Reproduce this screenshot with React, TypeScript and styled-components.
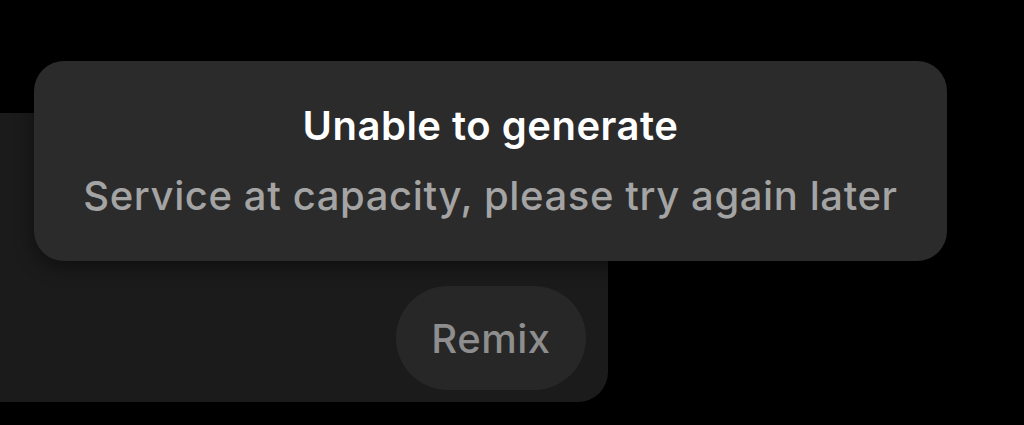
import React from 'react';
import styled, { createGlobalStyle } from 'styled-components';

const GlobalStyle = createGlobalStyle`
  html, body {
    margin: 0;
    padding: 0;
    background: #000;
  }
  body {
    font-family: Inter, "Noto Sans", "Liberation Sans", sans-serif;
    -webkit-font-smoothing: antialiased;
  }
`;

const Stage = styled.div`
  position: relative;
  width: 1024px;
  height: 425px;
  overflow: hidden;
  background: #000;
`;

const Card = styled.div`
  display: flex;
  justify-content: flex-end;
  align-items: flex-end;
  box-sizing: border-box;
  width: 608px;
  height: 289px;
  margin-top: 113px;
  padding: 0 22px 12px 0;
  background: #1b1b1b;
  border-radius: 0 0 30px 0;
`;

const RemixButton = styled.button`
  display: flex;
  align-items: center;
  justify-content: center;
  width: 190px;
  height: 104px;
  border: none;
  border-radius: 52px;
  background: #272727;
  color: #8e8e8e;
  font-family: inherit;
  font-size: 40px;
  font-weight: 500;
  letter-spacing: 0.5px;
  padding: 0;
`;

const Toast = styled.div`
  position: absolute;
  left: 34px;
  top: 61px;
  width: 913px;
  height: 200px;
  box-sizing: border-box;
  display: flex;
  flex-direction: column;
  align-items: center;
  justify-content: center;
  gap: 26px;
  background: #2b2b2b;
  border-radius: 30px;
  box-shadow: 0 6px 20px rgba(0, 0, 0, 0.45);
`;

const Title = styled.div`
  color: #ffffff;
  font-size: 40px;
  font-weight: 600;
  line-height: 44px;
  letter-spacing: 0.5px;
`;

const Subtitle = styled.div`
  color: #a4a4a4;
  font-size: 40px;
  font-weight: 500;
  line-height: 44px;
  letter-spacing: 0.6px;
`;

const App = () => (
  <>
    <GlobalStyle />
    <Stage>
      <Card>
        <RemixButton>Remix</RemixButton>
      </Card>
      <Toast>
        <Title>Unable to generate</Title>
        <Subtitle>Service at capacity, please try again later</Subtitle>
      </Toast>
    </Stage>
  </>
);

export default App;
